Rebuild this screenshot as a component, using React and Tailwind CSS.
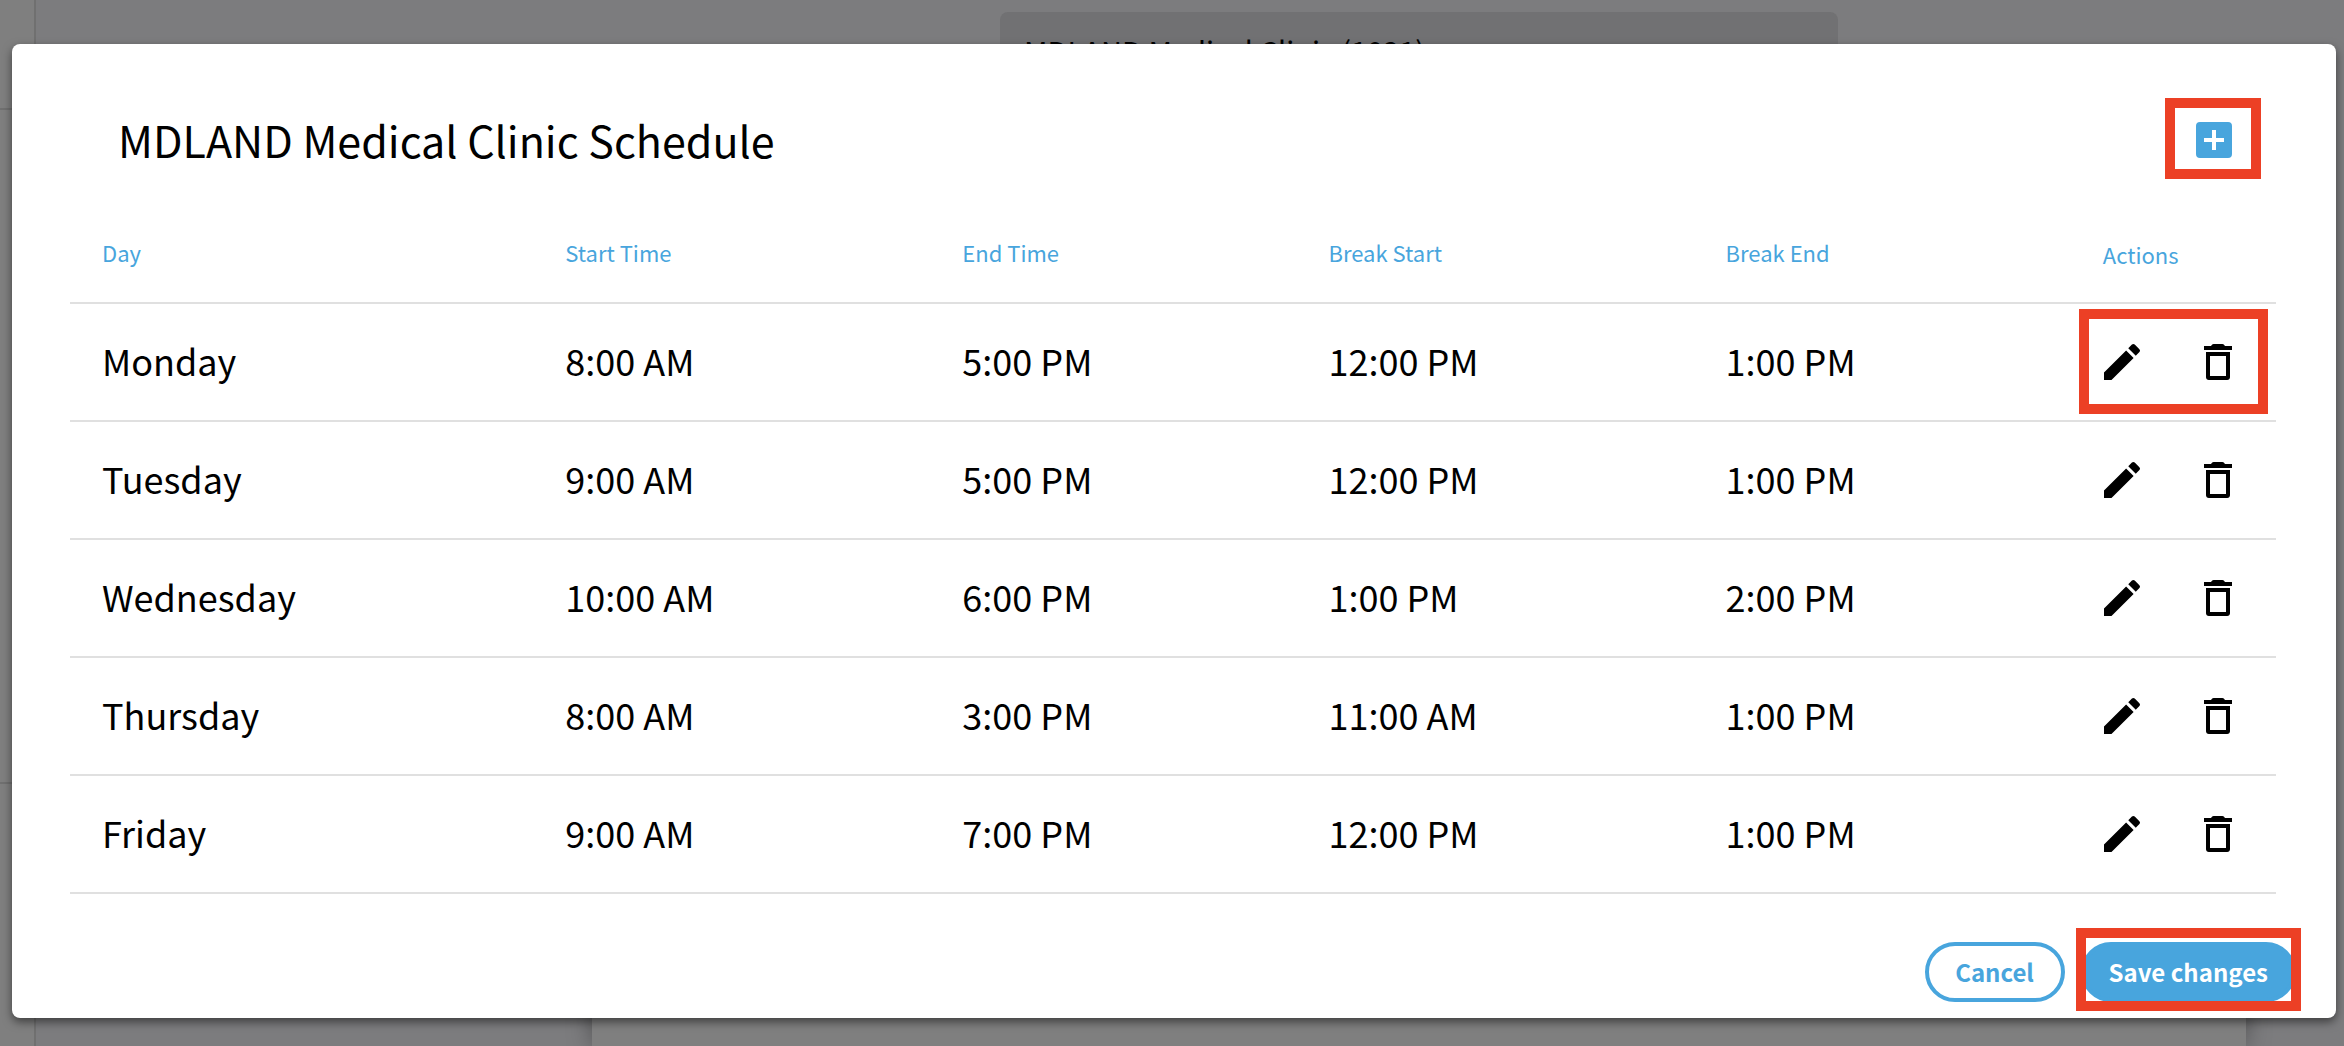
const days = [
  ["Monday", "8:00 AM", "5:00 PM", "12:00 PM", "1:00 PM"],
  ["Tuesday", "9:00 AM", "5:00 PM", "12:00 PM", "1:00 PM"],
  ["Wednesday", "10:00 AM", "6:00 PM", "1:00 PM", "2:00 PM"],
  ["Thursday", "8:00 AM", "3:00 PM", "11:00 AM", "1:00 PM"],
  ["Friday", "9:00 AM", "7:00 PM", "12:00 PM", "1:00 PM"],
];

function Pencil() {
  return (
    <svg viewBox="0 0 24 24" className="size-12" fill="currentColor" aria-hidden="true">
      <path d="M3 17.25V21h3.75L17.81 9.94l-3.75-3.75L3 17.25zM20.71 7.04a1 1 0 0 0 0-1.41l-2.34-2.34a1 1 0 0 0-1.41 0l-1.83 1.83 3.75 3.75 1.83-1.83z" />
    </svg>
  );
}

function Trash() {
  return (
    <svg viewBox="0 0 24 24" className="size-12" fill="currentColor" aria-hidden="true">
      <path d="M6 7v12.6c0 .8.6 1.4 1.4 1.4h9.2c.8 0 1.4-.6 1.4-1.4V7H6zM8 9h8v10H8V9zM15.5 4l-.6-.7a1 1 0 0 0-.7-.3H9.8a1 1 0 0 0-.7.3L8.5 4H5v2h14V4z" />
    </svg>
  );
}

function AddBox() {
  return (
    <svg viewBox="0 0 24 24" className="size-12" fill="currentColor" aria-hidden="true">
      <path d="M19 3H5a2 2 0 0 0-2 2v14a2 2 0 0 0 2 2h14a2 2 0 0 0 2-2V5a2 2 0 0 0-2-2zm-2 10h-4v4h-2v-4H7v-2h4V7h2v4h4v2z" />
    </svg>
  );
}

function Marker({ className }) {
  return <span aria-hidden="true" className={`pointer-events-none absolute border-10 border-[#ec4025] ${className}`} />;
}

function Backdrop() {
  return (
    <div className="absolute inset-0 flex overflow-hidden bg-[#7c7c7e]" aria-hidden="true">
      <div className="flex w-9 shrink-0 flex-col border-r-2 border-[#707070] bg-[#7f7f7f]">
        <div className="h-[110px] border-b-2 border-[#707070]" />
        <div className="h-[674px] border-b-2 border-[#707070]" />
      </div>
      <div className="flex grow flex-col justify-between pt-3 pr-[98px]">
        <div className="ml-[964px] h-24 w-[838px] rounded-lg bg-[#717173] px-6 pt-[22px] text-[29px] leading-8 text-black">
          MDLAND Medical Clinic (1021)
        </div>
        <div className="ml-[556px] h-12 bg-[#7f7f7f] shadow-[0_0_24px_rgba(0,0,0,0.35)]" />
      </div>
    </div>
  );
}

export default function App() {
  return (
    <div className="relative min-h-screen pt-11 pr-2 pb-7 pl-3 font-['Noto_Sans_CJK_SC',sans-serif] text-black">
      <Backdrop />
      <main
        role="dialog"
        aria-labelledby="title"
        className="relative rounded-lg bg-white px-10 pb-4 shadow-[0_4px_10px_rgba(0,0,0,0.5)]"
      >
        <header className="flex h-48 items-start justify-between pt-16 pr-[58px] pl-[66px]">
          <h1 id="title" className="text-[43px] leading-[62px]">MDLAND Medical Clinic Schedule</h1>
          <button type="button" aria-label="Add day" className="relative mt-2 text-[#48a5dd]">
            <AddBox />
            <Marker className="-top-[18px] -right-[23px] -bottom-[15px] -left-[25px]" />
          </button>
        </header>
        <div className="pr-5 pl-[18px]">
          <table className="-mt-16 w-full table-fixed border-collapse text-left">
            <thead>
              <tr className="h-[131px] border-b-2 border-[#e0e0e0] text-[22px] leading-8 text-[#48a5dd]">
                <th scope="col" className="w-[21%] pt-[30px] pl-8 font-normal">Day</th>
                <th scope="col" className="w-[18%] pt-[30px] pl-8 font-normal">Start Time</th>
                <th scope="col" className="w-[16.6%] pt-[30px] pl-8 font-normal">End Time</th>
                <th scope="col" className="w-[18%] pt-[30px] pl-8 font-normal">Break Start</th>
                <th scope="col" className="w-[17.1%] pt-[30px] pl-8 font-normal">Break End</th>
                <th scope="col" className="pt-[34px] pl-8 font-normal">Actions</th>
              </tr>
            </thead>
            <tbody>
              {days.map((row, i) => (
                <tr key={row[0]} className="h-[118px] border-b-2 border-[#e0e0e0] text-[36px] leading-[52px]">
                  {row.map((text, j) => (
                    <td key={j} className="pb-1 pl-8">{text}</td>
                  ))}
                  <td className="pl-[27px]">
                    <div className="relative flex w-36 justify-between">
                      <button type="button" aria-label={`Edit ${row[0]}`}><Pencil /></button>
                      <button type="button" aria-label={`Delete ${row[0]}`}><Trash /></button>
                      {i === 0 && <Marker className="-top-[29px] -right-[26px] -bottom-[28px] -left-[19px]" />}
                    </div>
                  </td>
                </tr>
              ))}
            </tbody>
          </table>
        </div>
        <footer className="flex justify-end gap-4 pt-12 text-[24px] font-bold leading-[52px]">
          <button type="button" className="min-w-[140px] rounded-full border-4 border-[#48a5dd] px-6 text-[#48a5dd]">Cancel</button>
          <button type="button" className="relative rounded-full border-4 border-[#48a5dd] bg-[#48a5dd] px-6 text-white">
            Save changes
            <Marker className="-top-[18px] -right-[9px] -bottom-[13px] -left-[9px]" />
          </button>
        </footer>
      </main>
    </div>
  );
}
